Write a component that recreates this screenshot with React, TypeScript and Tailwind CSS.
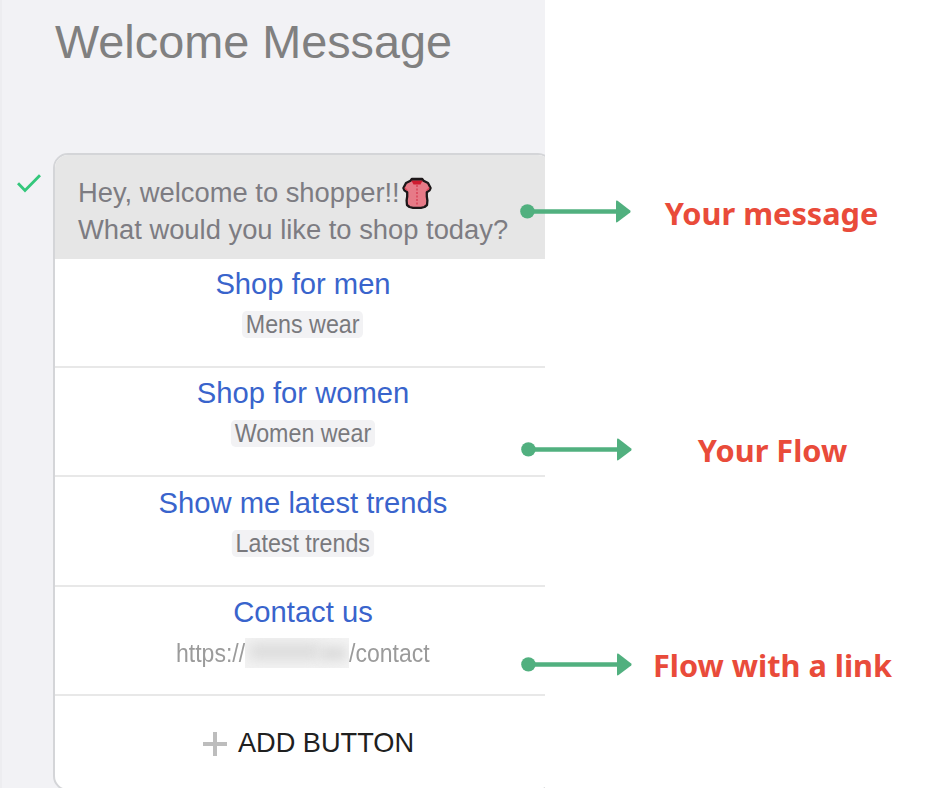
import React from 'react';
import { clsx } from 'clsx';

interface FlowButton {
  title: string;
  target?: string;
  link?: boolean;
}

const flowButtons: FlowButton[] = [
  { title: 'Shop for men', target: 'Mens wear' },
  { title: 'Shop for women', target: 'Women wear' },
  { title: 'Show me latest trends', target: 'Latest trends' },
  { title: 'Contact us', link: true },
];

const CheckIcon: React.FC<{ className?: string }> = ({ className }) => (
  <svg viewBox="0 0 24 19" className={className} fill="none" stroke="#34c77b" strokeWidth="2.9">
    <path d="M1 9.2 L8 16.4 L23 1.3" />
  </svg>
);

const ShirtIcon: React.FC = () => (
  <svg viewBox="0 0 30 32" className="ml-[2px] h-8 w-[30px] shrink-0">
    <path
      d="M10 1.8 H20 L21.5 3.8 L26 6 L28.6 11 L27.6 13.4 L24.8 15.2 V19.5 L25.4 23.5 L25 28 L22.5 30 L19 30.8 H11 L7.5 30 L5 28 L4.6 23.5 L5.2 19.5 V15.2 L2.4 13.4 L1.4 11 L4 6 L8.5 3.8 Z"
      fill="#e77a87"
      stroke="#1d1719"
      strokeWidth="2.3"
      strokeLinejoin="round"
    />
    <path d="M2.8 10 L6.2 13.6 L4.8 13.6 L2.6 12 Z M27.2 10 L23.8 13.6 L25.2 13.6 L27.4 12 Z" fill="#e4475a" />
    <path d="M9.4 3.6 H20.6 L18.5 7.6 H11.5 Z" fill="#cf1c30" />
    <path d="M10 1 H20 V3.4 H10 Z" fill="#1d1719" />
    <path d="M15 8 V29" stroke="#dc5062" strokeWidth="2" strokeDasharray="2 1.5" />
  </svg>
);

const PlusIcon: React.FC = () => (
  <svg viewBox="0 0 24 24" className="mr-[11px] h-6 w-6" stroke="#bdbdbd" strokeWidth="4">
    <path d="M12 0 V24 M0 12 H24" />
  </svg>
);

const ArrowIcon: React.FC<{ className?: string }> = ({ className }) => (
  <svg viewBox="0 0 111 24" className={clsx('h-6 w-[111px] shrink-0', className)} fill="#51b07f">
    <circle cx="7.4" cy="12.4" r="7.2" />
    <path d="M7 10.2 H98 V14.7 H7 Z" />
    <path d="M96 2.4 Q96 0.8 97.6 1.8 L110.2 11.4 Q111 12.4 110.2 13.4 L97.6 23 Q96 24 96 22.4 Z" />
  </svg>
);

const FlowRow: React.FC<{ button: FlowButton }> = ({ button }) => (
  <div className="flex h-[109.4px] flex-col items-center border-b-2 border-[#e8e8e8] pt-[8.2px]">
    <span className="text-[29.2px] leading-[34px] text-[#3964cc]">{button.title}</span>
    {button.link ? (
      <div className="mt-[8.6px] flex h-[30px] scale-x-[0.92] items-center text-[25px] leading-[30px] text-[#9b9b9b]">
        <span>https://</span>
        {/* hidden domain */}
        <span className="relative h-[30px] w-[113px] overflow-hidden bg-[#f3f3f3]">
          <span className="absolute left-1 top-[6px] h-[15px] w-[78px] rounded bg-[#d9d9d9] blur-[7px]" />
          <span className="absolute left-[82px] top-[9px] h-[13px] w-[28px] rounded bg-[#d9d9d9] blur-[6px]" />
        </span>
        <span>/contact</span>
      </div>
    ) : (
      <span className="mt-[10px] h-[27px] -translate-x-[0.5px] scale-x-[0.93] rounded-[5px] bg-[#f2f2f4] px-1 text-[25px] leading-[27px] text-[#79797d]">
        {button.target}
      </span>
    )}
  </div>
);

const MessageCard: React.FC = () => (
  <div className="h-[638px] w-[500px] shrink-0 overflow-hidden rounded-[15px] border-2 border-[#d4d5d8] bg-white">
    <div className="h-[103.6px] bg-[#e6e6e6] pl-[23px] pt-[19px] text-[27.35px] leading-[37px] text-[#7d7c82]">
      <p className="flex h-[37px] items-center whitespace-nowrap">
        Hey, welcome to shopper!!
        <ShirtIcon />
      </p>
      <p className="whitespace-nowrap">What would you like to shop today?</p>
    </div>
    {flowButtons.map((button) => (
      <FlowRow key={button.title} button={button} />
    ))}
    <div className="flex h-[95px] items-center justify-center pl-[11px] text-[27.2px] text-[#202020]">
      <PlusIcon />
      <span>ADD BUTTON</span>
    </div>
  </div>
);

const Annotation: React.FC<{ label: string; className?: string; textClassName?: string }> = ({
  label,
  className,
  textClassName,
}) => (
  <div className={clsx('flex h-10 items-center', className)}>
    <ArrowIcon />
    <span
      className={clsx(
        'w-[281px] whitespace-nowrap text-center font-["Noto_Sans",sans-serif] text-[30.7px] font-bold leading-10 text-[#e94b3a]',
        textClassName
      )}
    >
      {label}
    </span>
  </div>
);

const App: React.FC = () => {
  return (
    <div className="flex h-[788px] w-[940px] overflow-hidden bg-white font-['Liberation_Sans',Arial,sans-serif]">
      <section className="h-full w-[545px] shrink-0 overflow-hidden border-l-2 border-[#ededf0] bg-[#f2f2f5]">
        <h1 className="h-[153px] pl-[53px] pt-[15px] text-[46.8px] leading-[54px] text-[#808080]">
          Welcome Message
        </h1>
        <div className="flex">
          <div className="w-[51px] shrink-0 pl-[15px] pt-[21px]">
            <CheckIcon className="h-[19px] w-6" />
          </div>
          <MessageCard />
        </div>
      </section>

      <aside className="z-10 -ml-[24px] flex w-[419px] flex-col">
        <Annotation label="Your message" className="-ml-px mt-[191px]" textClassName="mt-[4px]" />
        <Annotation label="Your Flow" className="mt-[198px]" textClassName="mt-[2px]" />
        <Annotation label="Flow with a link" className="mt-[175px]" textClassName="mt-[2px]" />
      </aside>
    </div>
  );
};

export default App;
